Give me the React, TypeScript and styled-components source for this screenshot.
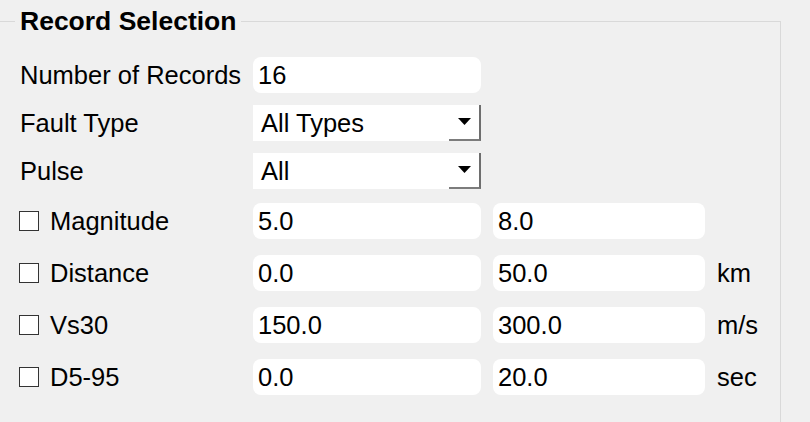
import React from 'react'
import styled, { createGlobalStyle } from 'styled-components'

const GlobalStyle = createGlobalStyle`
  html, body {
    margin: 0;
    padding: 0;
    background: #f0f0f0;
    overflow: hidden;
  }
  body {
    font-family: "Liberation Sans", Arial, sans-serif;
    color: #000;
  }
`

const Page = styled.div`
  width: 810px;
  height: 422px;
  overflow: hidden;
`

const Group = styled.fieldset`
  box-sizing: border-box;
  width: 782px;
  margin: 6px 0 0 -1px;
  padding: 21px 0 60px 20px;
  border: 1px solid #d9d9d9;
  border-radius: 0;
  min-width: 0;
`

const Legend = styled.legend`
  margin-left: -5px;
  padding: 0 5px;
  font-size: 26.5px;
  line-height: 30px;
  font-weight: bold;
`

const Row = styled.div<{ $top: number }>`
  display: grid;
  grid-template-columns: 221px 228px 212px auto;
  column-gap: 12px;
  align-items: center;
  height: 36px;
  margin-top: ${p => p.$top}px;
  font-size: 25.5px;
`

const Label = styled.div`
  display: flex;
  align-items: center;
  gap: 11px;
  white-space: nowrap;
`

const Check = styled.span`
  box-sizing: border-box;
  width: 20px;
  height: 20px;
  margin-left: -1px;
  border: 1px solid #333;
  background: #fff;
`

const Field = styled.input`
  box-sizing: border-box;
  width: 100%;
  height: 36px;
  padding: 0 5px;
  border: none;
  border-radius: 8px;
  background: #fff;
  font-family: inherit;
  font-size: 25.5px;
  color: #000;
  outline: none;
`

const Combo = styled.div`
  display: flex;
  height: 36px;
  background: #fff;
`

const ComboText = styled.div`
  flex: 1;
  display: flex;
  align-items: center;
  padding-left: 8px;
`

const DropButton = styled.div`
  box-sizing: border-box;
  width: 32px;
  height: 36px;
  display: flex;
  align-items: center;
  justify-content: center;
  background: #fff;
  border-right: 2px solid #6e6e6e;
  border-bottom: 2px solid #7c7c7c;
  padding: 0 0 1px 0;
`

const Unit = styled.div`
  white-space: nowrap;
`

function Arrow() {
  return (
    <svg width="13" height="7" viewBox="0 0 13 7">
      <polygon points="0,0 13,0 6.5,7" fill="#000" />
    </svg>
  )
}

type RangeRow = { name: string; min: string; max: string; unit?: string; top: number }

const ranges: RangeRow[] = [
  { name: 'Magnitude', min: '5.0', max: '8.0', top: 14 },
  { name: 'Distance', min: '0.0', max: '50.0', unit: 'km', top: 16 },
  { name: 'Vs30', min: '150.0', max: '300.0', unit: 'm/s', top: 16 },
  { name: 'D5-95', min: '0.0', max: '20.0', unit: 'sec', top: 16 },
]

export default function App() {
  return (
    <Page>
      <GlobalStyle />
      <Group>
        <Legend>Record Selection</Legend>

        <Row $top={0}>
          <Label>Number of Records</Label>
          <Field defaultValue="16" />
        </Row>

        <Row $top={12}>
          <Label>Fault Type</Label>
          <Combo>
            <ComboText>All Types</ComboText>
            <DropButton><Arrow /></DropButton>
          </Combo>
        </Row>

        <Row $top={12}>
          <Label>Pulse</Label>
          <Combo>
            <ComboText>All</ComboText>
            <DropButton><Arrow /></DropButton>
          </Combo>
        </Row>

        {ranges.map(r => (
          <Row key={r.name} $top={r.top}>
            <Label>
              <Check />
              {r.name}
            </Label>
            <Field defaultValue={r.min} />
            <Field defaultValue={r.max} />
            {r.unit && <Unit>{r.unit}</Unit>}
          </Row>
        ))}
      </Group>
    </Page>
  )
}
